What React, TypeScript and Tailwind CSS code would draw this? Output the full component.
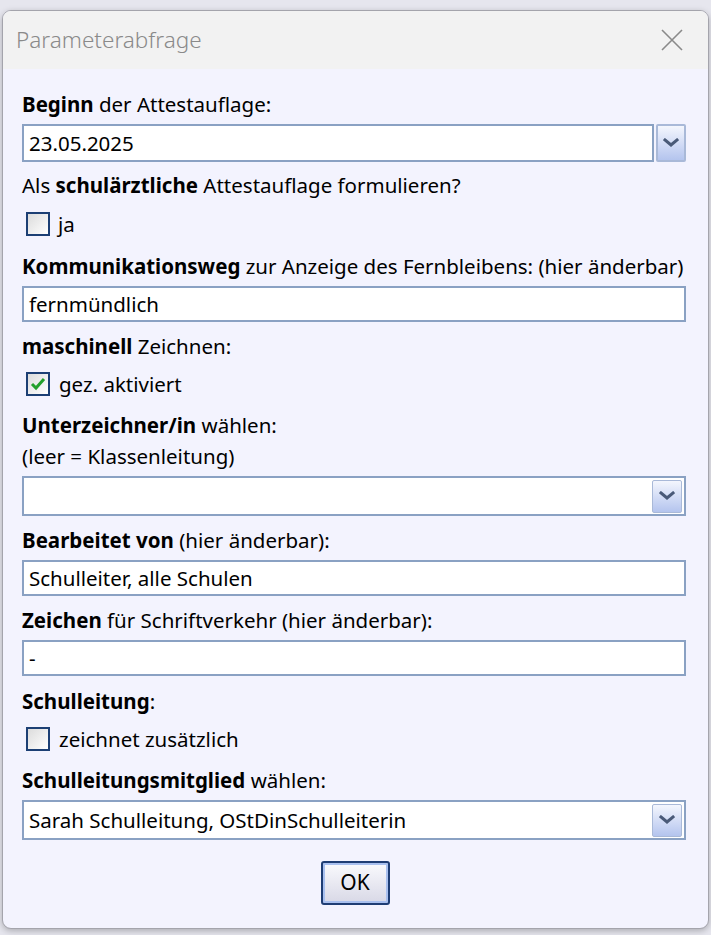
import React from "react";

const Chevron = () => (
  <svg width="16" height="10" viewBox="0 0 16 10">
    <path d="M2 2 L8 7 L14 2" fill="none" stroke="#4a5a78" strokeWidth="3" strokeLinecap="square" />
  </svg>
);

const DropButton = ({ className = "" }: { className?: string }) => (
  <div
    className={`flex items-center justify-center rounded-[2px] border border-[#a9b9d8] bg-gradient-to-b from-[#f4f6fd] to-[#b4c4ee] ${className}`}
  >
    <Chevron />
  </div>
);

const Check = ({ checked = false }: { checked?: boolean }) => (
  <div className="flex h-[24px] w-[24px] items-center justify-center border-2 border-[#1c3f74] bg-gradient-to-br from-[#dcdcdc] to-white">
    {checked && (
      <svg width="16" height="14" viewBox="0 0 16 14">
        <path d="M2 7 L6 11 L14 2" fill="none" stroke="#22a02a" strokeWidth="3" />
      </svg>
    )}
  </div>
);

const TextBox = ({ value, className = "" }: { value: string; className?: string }) => (
  <div className={`flex items-center border-2 border-[#8aa1c3] bg-white pl-[5px] text-[20.5px] text-black ${className}`}>
    {value}
  </div>
);

const SelectBox = ({ value, className = "" }: { value: string; className?: string }) => (
  <div className={`flex items-center justify-between border-2 border-[#8aa1c3] bg-white pl-[5px] pr-[2px] text-[20.5px] text-black ${className}`}>
    <span>{value}</span>
    <DropButton className="h-[33px] w-[30px]" />
  </div>
);

const Label = ({ children, className = "" }: { children: React.ReactNode; className?: string }) => (
  <div className={`h-[24px] whitespace-nowrap leading-[24px] text-[20.5px] text-black ${className}`}>{children}</div>
);

export default function App() {
  return (
    <div
      className="h-[935px] w-[711px] bg-[#e6e6ee] pl-[2px] pt-[10px]"
      style={{ fontFamily: '"Noto Sans", "Open Sans", sans-serif' }}
    >
      <div className="h-[919px] w-[707px] overflow-hidden rounded-[9px] border border-[#a4a4ac] bg-[#f3f3fe] shadow-[0_2px_6px_rgba(0,0,0,0.25)]">
        {/* Title bar */}
        <div className="flex h-[58px] items-center justify-between bg-[#f2f2f2] pl-[13px] pr-[25px]">
          <span className="text-[22.5px] font-light text-[#8a8a8a]">Parameterabfrage</span>
          <svg width="22" height="22" viewBox="0 0 22 22">
            <path d="M1 1 L21 21 M21 1 L1 21" stroke="#8a8a8a" strokeWidth="1.6" />
          </svg>
        </div>

        {/* Content */}
        <div className="flex flex-col pl-[19px] pr-[22px]">
          <Label className="mt-[23px]">
            <b>Beginn</b> der Attestauflage:
          </Label>
          <div className="mt-[8px] flex gap-[2px]">
            <TextBox value="23.05.2025" className="h-[38px] flex-1" />
            <DropButton className="h-[38px] w-[30px] border-2" />
          </div>

          <Label className="mt-[11px]">
            Als <b>schulärztliche</b> Attestauflage formulieren?
          </Label>
          <div className="mt-[15px] flex items-center gap-[8px] pl-[4px]">
            <Check />
            <span className="text-[20.5px] leading-[24px]">ja</span>
          </div>

          <Label className="mt-[18px]">
            <b>Kommunikationsweg</b> zur Anzeige des Fernbleibens: (hier änderbar)
          </Label>
          <TextBox value="fernmündlich" className="mt-[8px] h-[36px]" />

          <Label className="mt-[12px]">
            <b>maschinell</b> Zeichnen:
          </Label>
          <div className="mt-[14px] flex items-center gap-[9px] pl-[4px]">
            <Check checked />
            <span className="text-[20.5px] leading-[24px]">gez. aktiviert</span>
          </div>

          <Label className="mt-[17px]">
            <b>Unterzeichner/in</b> wählen:
          </Label>
          <Label className="mt-[7px]">(leer = Klassenleitung)</Label>
          <SelectBox value="" className="mt-[8px] h-[40px]" />

          <Label className="mt-[12px]">
            <b>Bearbeitet von</b> (hier änderbar):
          </Label>
          <TextBox value="Schulleiter, alle Schulen" className="mt-[8px] h-[36px]" />

          <Label className="mt-[12px]">
            <b>Zeichen</b> für Schriftverkehr (hier änderbar):
          </Label>
          <TextBox value="-" className="mt-[8px] h-[36px]" />

          <Label className="mt-[13px]">
            <b>Schulleitung</b>:
          </Label>
          <div className="mt-[14px] flex items-center gap-[9px] pl-[4px]">
            <Check />
            <span className="text-[20.5px] leading-[24px]">zeichnet zusätzlich</span>
          </div>

          <Label className="mt-[17px]">
            <b>Schulleitungsmitglied</b> wählen:
          </Label>
          <SelectBox value="Sarah Schulleitung, OStDinSchulleiterin" className="mt-[8px] h-[40px]" />

          <div className="mt-[21px] flex justify-center pl-[2px]">
            <button className="h-[44px] w-[69px] rounded-[3px] border-2 border-[#1f3d74] bg-gradient-to-b from-[#fafafd] to-[#d8d8e6] text-[21px] text-black shadow-[inset_0_0_0_2px_#a9c0ef]">
              OK
            </button>
          </div>
        </div>
      </div>
    </div>
  );
}
